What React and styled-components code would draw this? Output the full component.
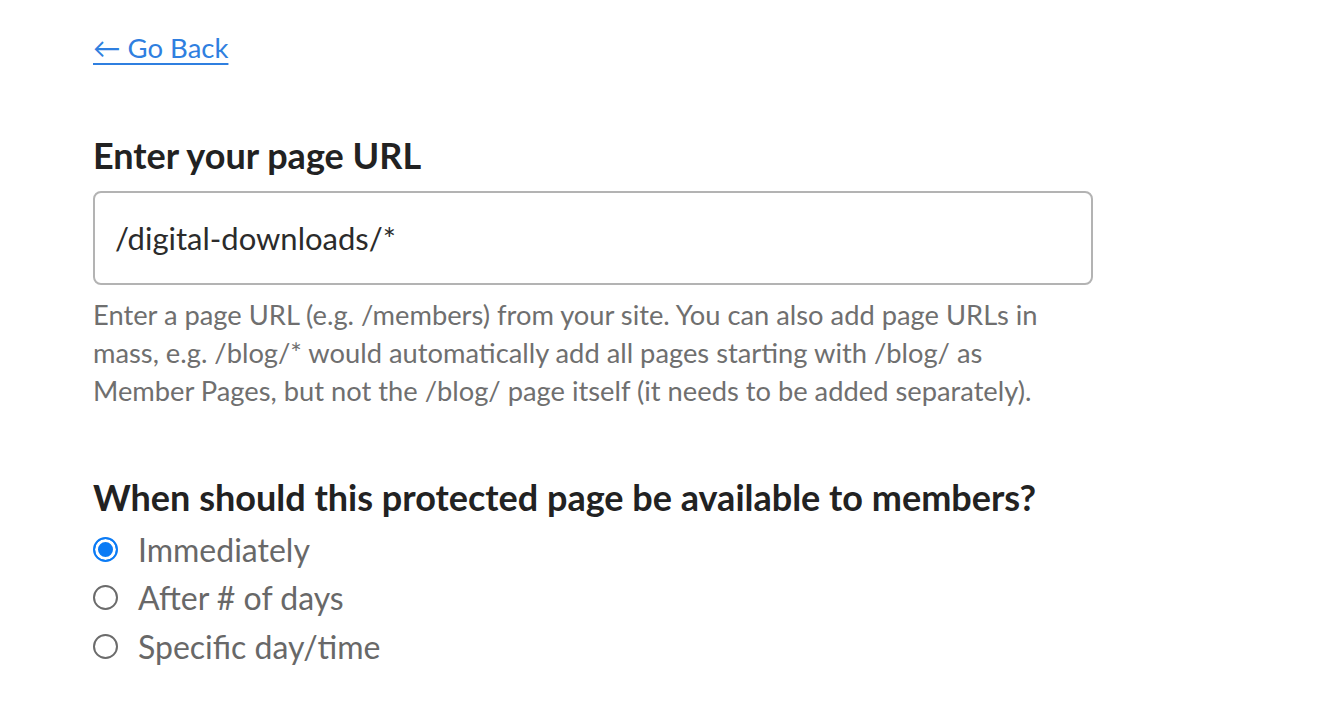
import React, { useState } from "react";
import styled, { createGlobalStyle } from "styled-components";

const GlobalStyle = createGlobalStyle`
    body {
        margin: 0;
        background: #fff;
        font-family: Lato, "Open Sans", sans-serif;
    }
`;

const options = ["Immediately", "After # of days", "Specific day/time"];

function App() {
    const [url, setUrl] = useState("/digital-downloads/*");
    const [when, setWhen] = useState("Immediately");

    return (
        <>
            <GlobalStyle />
            <Page>
                <BackLink href="#">← Go Back</BackLink>

                <Section>
                    <Heading>Enter your page URL</Heading>
                    <UrlInput
                        value={url}
                        onChange={(e) => setUrl(e.target.value)}
                    />
                    <Help>
                        Enter a page URL (e.g. /members) from your site. You can
                        also add page URLs in mass, e.g. /blog/* would
                        automatically add all pages starting with /blog/ as
                        Member Pages, but not the /blog/ page itself (it needs
                        to be added separately).
                    </Help>
                </Section>

                <Section $gap={65}>
                    <Heading $below={6}>
                        When should this protected page be available to members?
                    </Heading>
                    <RadioList>
                        {options.map((o) => (
                            <RadioRow key={o}>
                                <Radio
                                    type="radio"
                                    name="when"
                                    checked={when === o}
                                    onChange={() => setWhen(o)}
                                />
                                {o}
                            </RadioRow>
                        ))}
                    </RadioList>
                </Section>
            </Page>
        </>
    );
}

const Page = styled.div`
    padding: 30px 93px 40px;
    display: flex;
    flex-direction: column;
    align-items: flex-start;
`;
const BackLink = styled.a`
    color: #2f7fe0;
    font-size: 27.5px;
    line-height: 36px;
    text-decoration: underline;
    text-underline-offset: 5px;
    text-decoration-thickness: 2px;
`;
const Section = styled.div`
    width: 1000px;
    margin-top: ${(p) => p.$gap || 67}px;
`;
const Heading = styled.h2`
    margin: 0 0 ${(p) => (p.$below !== undefined ? p.$below : 14)}px;
    font-size: 36px;
    font-weight: 700;
    line-height: 44px;
    color: #222;
`;
const UrlInput = styled.input`
    display: block;
    box-sizing: border-box;
    width: 1000px;
    height: 94px;
    padding: 0 20px;
    border: 2px solid #b3b3b3;
    border-radius: 8px;
    font-family: Lato, sans-serif;
    font-size: 31px;
    color: #2b2b2b;
    outline: none;
`;
const Help = styled.p`
    margin: 11px 0 0;
    max-width: 975px;
    font-size: 27.3px;
    line-height: 38px;
    color: #6f6f6f;
`;
const RadioList = styled.div`
    display: flex;
    flex-direction: column;
`;
const RadioRow = styled.label`
    display: flex;
    align-items: center;
    gap: 20px;
    height: 48.5px;
    font-size: 32px;
    color: #686868;
    cursor: pointer;
`;
const Radio = styled.input`
    appearance: none;
    box-sizing: border-box;
    margin: 0;
    width: 25px;
    height: 25px;
    border-radius: 50%;
    border: 2px solid #6b6b6b;
    background: #fff;
    cursor: pointer;

    &:checked {
        border-color: #0b7bf5;
        background: #0b7bf5;
        box-shadow: inset 0 0 0 3px #fff;
    }
`;

export default App;
